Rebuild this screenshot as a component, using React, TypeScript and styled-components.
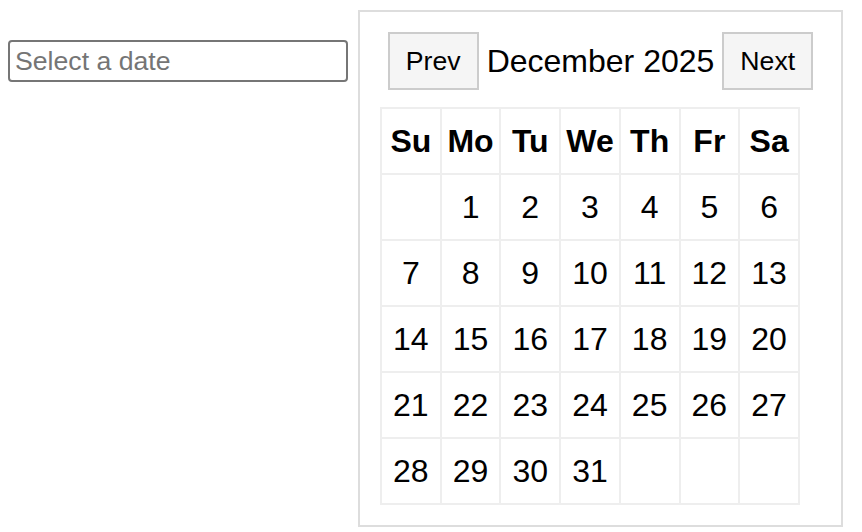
import React from "react";
import styled, { createGlobalStyle } from "styled-components";

const GlobalStyle = createGlobalStyle`
  html, body {
    margin: 0;
    padding: 0;
    background: #ffffff;
  }
  body {
    font-family: "Liberation Sans", Arial, sans-serif;
    color: #000000;
  }
`;

const Page = styled.div`
  display: flex;
  align-items: flex-start;
  gap: 10px;
  padding: 10px 8px;
`;

const DateInput = styled.input`
  box-sizing: border-box;
  width: 340px;
  height: 42px;
  margin-top: 30px;
  padding: 0 5px;
  border: 2px solid #767676;
  border-radius: 4px;
  font-family: "Liberation Sans", Arial, sans-serif;
  font-size: 26.67px;
  color: #000;
  background: #fff;
  outline: none;
  &::placeholder {
    color: #757575;
  }
`;

const Calendar = styled.div`
  box-sizing: border-box;
  width: 485px;
  padding: 20px;
  border: 2px solid #dddddd;
  background: #fff;
`;

const Header = styled.div`
  display: flex;
  justify-content: center;
  align-items: center;
  gap: 8px;
`;

const NavButton = styled.button`
  box-sizing: border-box;
  height: 58px;
  padding: 12px 16px;
  border: 2px solid #cccccc;
  border-radius: 0;
  background: #f5f5f5;
  font-family: "Liberation Sans", Arial, sans-serif;
  font-size: 26.67px;
  line-height: 30px;
  color: #000;
  cursor: pointer;
`;

const MonthLabel = styled.span`
  font-size: 32px;
  line-height: 37px;
`;

const Grid = styled.table`
  margin-top: 17px;
  width: 420px;
  table-layout: fixed;
  border-collapse: collapse;
  font-size: 32px;
`;

const HeadCell = styled.th`
  height: 64px;
  padding: 0;
  border: 2px solid #eeeeee;
  font-weight: bold;
  text-align: center;
  vertical-align: middle;
`;

const DayCell = styled.td`
  height: 64px;
  padding: 0;
  border: 2px solid #eeeeee;
  text-align: center;
  vertical-align: middle;
`;

const dayNames = ["Su", "Mo", "Tu", "We", "Th", "Fr", "Sa"];

function buildWeeks(year: number, month: number): (number | null)[][] {
  const first = new Date(year, month, 1).getDay();
  const count = new Date(year, month + 1, 0).getDate();
  const cells: (number | null)[] = [];
  for (let i = 0; i < first; i++) cells.push(null);
  for (let d = 1; d <= count; d++) cells.push(d);
  while (cells.length % 7 !== 0) cells.push(null);
  const weeks: (number | null)[][] = [];
  for (let i = 0; i < cells.length; i += 7) weeks.push(cells.slice(i, i + 7));
  return weeks;
}

export default function App() {
  const weeks = buildWeeks(2025, 11);
  return (
    <>
      <GlobalStyle />
      <Page>
        <DateInput type="text" placeholder="Select a date" readOnly />
        <Calendar>
          <Header>
            <NavButton type="button">Prev</NavButton>
            <MonthLabel>December 2025</MonthLabel>
            <NavButton type="button">Next</NavButton>
          </Header>
          <Grid>
            <thead>
              <tr>
                {dayNames.map((n) => (
                  <HeadCell key={n}>{n}</HeadCell>
                ))}
              </tr>
            </thead>
            <tbody>
              {weeks.map((week, wi) => (
                <tr key={wi}>
                  {week.map((d, di) => (
                    <DayCell key={di}>{d ?? ""}</DayCell>
                  ))}
                </tr>
              ))}
            </tbody>
          </Grid>
        </Calendar>
      </Page>
    </>
  );
}
